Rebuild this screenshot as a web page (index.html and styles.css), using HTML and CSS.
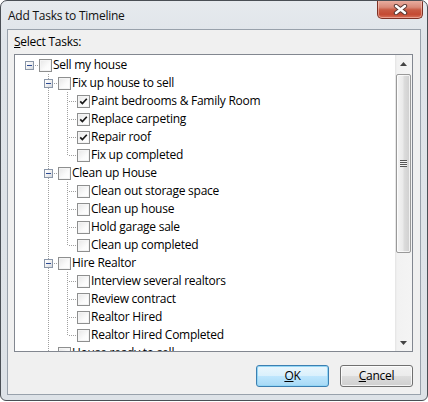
FILE: index.html
```html
<!DOCTYPE html>
<html>
<head>
<meta charset="utf-8">
<link rel="stylesheet" href="styles.css">
</head>
<body>
<div class="window">
  <div class="titlebar">
    <span class="title">Add Tasks to Timeline</span>
    <div class="close">
      <svg width="15" height="11" viewBox="0 0 15 11">
        <path d="M3 2 L12 9 M12 2 L3 9" stroke="#5a3a35" stroke-width="4.4" stroke-linecap="round"/>
        <path d="M3 2 L12 9 M12 2 L3 9" stroke="#ffffff" stroke-width="2.4" stroke-linecap="round"/>
      </svg>
    </div>
  </div>
  <div class="client">
    <div class="label"><u>S</u>elect Tasks:</div>
    <div class="listbox">
      <div class="tree">
        <div class="row"><span class="c e"><span class="exp"></span></span><span class="cb"></span><span class="txt">Sell my house</span></div>
        <div class="row"><span class="c"></span><span class="c e ev"><span class="exp"></span></span><span class="cb"></span><span class="txt">Fix up house to sell</span></div>
        <div class="row"><span class="c"></span><span class="c v"></span><span class="c t"></span><span class="cb on"><svg width="13" height="13" viewBox="0 0 13 13"><path d="M3.2 6.3 L5.4 8.6 L9.8 3.8" fill="none" stroke="#1a1a1a" stroke-width="1.7"/></svg></span><span class="txt">Paint bedrooms &amp; Family Room</span></div>
        <div class="row"><span class="c"></span><span class="c v"></span><span class="c t"></span><span class="cb on"><svg width="13" height="13" viewBox="0 0 13 13"><path d="M3.2 6.3 L5.4 8.6 L9.8 3.8" fill="none" stroke="#1a1a1a" stroke-width="1.7"/></svg></span><span class="txt">Replace carpeting</span></div>
        <div class="row"><span class="c"></span><span class="c v"></span><span class="c t"></span><span class="cb on"><svg width="13" height="13" viewBox="0 0 13 13"><path d="M3.2 6.3 L5.4 8.6 L9.8 3.8" fill="none" stroke="#1a1a1a" stroke-width="1.7"/></svg></span><span class="txt">Repair roof</span></div>
        <div class="row"><span class="c"></span><span class="c v"></span><span class="c l"></span><span class="cb"></span><span class="txt">Fix up completed</span></div>
        <div class="row"><span class="c"></span><span class="c e ev"><span class="exp"></span></span><span class="cb"></span><span class="txt">Clean up House</span></div>
        <div class="row"><span class="c"></span><span class="c v"></span><span class="c t"></span><span class="cb"></span><span class="txt">Clean out storage space</span></div>
        <div class="row"><span class="c"></span><span class="c v"></span><span class="c t"></span><span class="cb"></span><span class="txt">Clean up house</span></div>
        <div class="row"><span class="c"></span><span class="c v"></span><span class="c t"></span><span class="cb"></span><span class="txt">Hold garage sale</span></div>
        <div class="row"><span class="c"></span><span class="c v"></span><span class="c l"></span><span class="cb"></span><span class="txt">Clean up completed</span></div>
        <div class="row"><span class="c"></span><span class="c e ev"><span class="exp"></span></span><span class="cb"></span><span class="txt">Hire Realtor</span></div>
        <div class="row"><span class="c"></span><span class="c v"></span><span class="c t"></span><span class="cb"></span><span class="txt">Interview several realtors</span></div>
        <div class="row"><span class="c"></span><span class="c v"></span><span class="c t"></span><span class="cb"></span><span class="txt">Review contract</span></div>
        <div class="row"><span class="c"></span><span class="c v"></span><span class="c t"></span><span class="cb"></span><span class="txt">Realtor Hired</span></div>
        <div class="row"><span class="c"></span><span class="c v"></span><span class="c l"></span><span class="cb"></span><span class="txt">Realtor Hired Completed</span></div>
        <div class="row"><span class="c"></span><span class="c t"></span><span class="cb"></span><span class="txt">House ready to sell</span></div>
      </div>
      <div class="scrollbar">
        <div class="sbtn"><svg width="7" height="4" viewBox="0 0 7 4"><polygon points="3.5,0 7,4 0,4" fill="#444"/></svg></div>
        <div class="track">
          <div class="thumb"><span class="grip"></span></div>
        </div>
        <div class="sbtn"><svg width="7" height="4" viewBox="0 0 7 4"><polygon points="0,0 7,0 3.5,4" fill="#444"/></svg></div>
      </div>
    </div>
    <div class="buttons">
      <div class="btn default"><u>O</u>K</div>
      <div class="btn"><u>C</u>ancel</div>
    </div>
  </div>
</div>
</body>
</html>
```
FILE: styles.css
```css
html, body {
  margin: 0;
  padding: 0;
  background: #ffffff;
}
body {
  font-family: "Open Sans", "Noto Sans", sans-serif;
  font-size: 12px;
  letter-spacing: -0.25px;
  color: #000;
}
.window {
  box-sizing: border-box;
  width: 428px;
  height: 401px;
  border: 1px solid #4a4f55;
  border-radius: 7px 7px 6px 6px;
  background: linear-gradient(to bottom, #e6eaee 0, #dfe4e9 40px, #dde2e7 100%);
  display: flex;
  flex-direction: column;
  overflow: hidden;
}
.titlebar {
  height: 28px;
  display: flex;
  justify-content: space-between;
  align-items: flex-start;
  flex: none;
}
.title {
  padding-left: 7px;
  line-height: 16px;
  margin-top: 7px;
  color: #111;
}
.close {
  width: 46px;
  height: 19px;
  margin-right: 4px;
  margin-top: -1px;
  box-sizing: border-box;
  border: 1px solid #7d3125;
  border-top: none;
  border-radius: 0 0 5px 5px;
  background: linear-gradient(to bottom, #ebb2a5 0, #d98a79 40%, #c85a43 55%, #c44a32 80%, #d8735c 100%);
  box-shadow: inset 0 0 0 1px rgba(255, 210, 200, 0.5);
  display: flex;
  align-items: center;
  justify-content: center;
}
.client {
  box-sizing: border-box;
  margin: 0 6px;
  height: 366px;
  border: 1px solid #98a1ab;
  background: #f0f0f0;
  display: flex;
  flex-direction: column;
}
.label {
  margin: 4px 0 0 6px;
  line-height: 16px;
}
.listbox {
  box-sizing: border-box;
  margin: 4px 0 0 6px;
  width: 399px;
  height: 298px;
  border: 1px solid #828790;
  background: #fff;
  display: flex;
  overflow: hidden;
}
.tree {
  flex: 1;
  padding: 1px 0 0 5px;
  overflow: hidden;
}
.row {
  height: 18px;
  display: flex;
  align-items: flex-start;
  white-space: nowrap;
}
.c {
  width: 19px;
  height: 18px;
  flex: none;
  display: flex;
  justify-content: center;
  box-sizing: border-box;
}
.v {
  background: repeating-linear-gradient(to bottom, #a0a0a0 0 1px, transparent 1px 2px) 9px 0 / 1px 18px no-repeat;
}
.t {
  background:
    repeating-linear-gradient(to bottom, #a0a0a0 0 1px, transparent 1px 2px) 9px 0 / 1px 18px no-repeat,
    repeating-linear-gradient(to right, #a0a0a0 0 1px, transparent 1px 2px) 11px 9px / 8px 1px no-repeat;
}
.l {
  background:
    repeating-linear-gradient(to bottom, #a0a0a0 0 1px, transparent 1px 2px) 9px 0 / 1px 10px no-repeat,
    repeating-linear-gradient(to right, #a0a0a0 0 1px, transparent 1px 2px) 11px 9px / 8px 1px no-repeat;
}
.e {
  padding-top: 5px;
  background: repeating-linear-gradient(to right, #a0a0a0 0 1px, transparent 1px 2px) 15px 9px / 4px 1px no-repeat;
}
.ev {
  background:
    repeating-linear-gradient(to right, #a0a0a0 0 1px, transparent 1px 2px) 15px 9px / 4px 1px no-repeat,
    repeating-linear-gradient(to bottom, #a0a0a0 0 1px, transparent 1px 2px) 9px 0 / 1px 18px no-repeat;
}
.exp {
  box-sizing: border-box;
  width: 9px;
  height: 9px;
  border: 1px solid #8a96a8;
  background:
    linear-gradient(#2b4a94, #2b4a94) 1px 3px / 5px 1px no-repeat,
    linear-gradient(135deg, #ffffff 0, #f0f0f0 50%, #d4d8de 100%);
}
.cb {
  box-sizing: border-box;
  width: 13px;
  height: 13px;
  margin-top: 3px;
  flex: none;
  border: 1px solid #8e8f8f;
  background: linear-gradient(135deg, #e6e6e6 0, #fbfbfb 60%, #ffffff 100%);
  box-shadow: inset 0 0 0 1px #f4f4f4;
  display: flex;
}
.cb svg {
  margin: -1px;
}
.txt {
  margin-left: 1px;
  line-height: 18px;
  color: #000;
}
.scrollbar {
  width: 17px;
  flex: none;
  display: flex;
  flex-direction: column;
  background: linear-gradient(to right, #e3e3e3 0, #f2f2f2 2px, #f4f4f4 100%);
}
.sbtn {
  height: 17px;
  flex: none;
  display: flex;
  align-items: center;
  justify-content: center;
}
.track {
  flex: 1;
  padding-top: 2px;
}
.thumb {
  box-sizing: border-box;
  margin-left: 1px;
  width: 15px;
  height: 179px;
  border: 1px solid #999;
  border-radius: 2px;
  background: linear-gradient(to right, #f4f4f4 0, #eaeaea 45%, #dcdcdc 55%, #cfcfcf 100%);
  box-shadow: inset 0 0 0 1px rgba(255,255,255,0.7);
  display: flex;
  align-items: center;
  justify-content: center;
}
.grip {
  width: 7px;
  height: 7px;
  background: repeating-linear-gradient(to bottom, #555 0 1px, #f2f2f2 1px 2px);
}
.buttons {
  display: flex;
  justify-content: flex-end;
  gap: 11px;
  margin-top: 13px;
  padding-right: 7px;
}
.btn {
  box-sizing: border-box;
  width: 73px;
  height: 22px;
  border: 1px solid #707070;
  border-radius: 3px;
  background: linear-gradient(to bottom, #f2f2f2 0, #ebebeb 50%, #dddddd 51%, #cfcfcf 100%);
  box-shadow: inset 0 0 0 1px rgba(255,255,255,0.75);
  text-align: center;
  line-height: 19px;
}
.btn.default {
  border-color: #3c7fb1;
  background: linear-gradient(to bottom, #eaf6fd 0, #d9f0fc 50%, #bee6fd 51%, #a7d9f5 100%);
  box-shadow: inset 0 0 0 1px #94d6f5;
}
```
